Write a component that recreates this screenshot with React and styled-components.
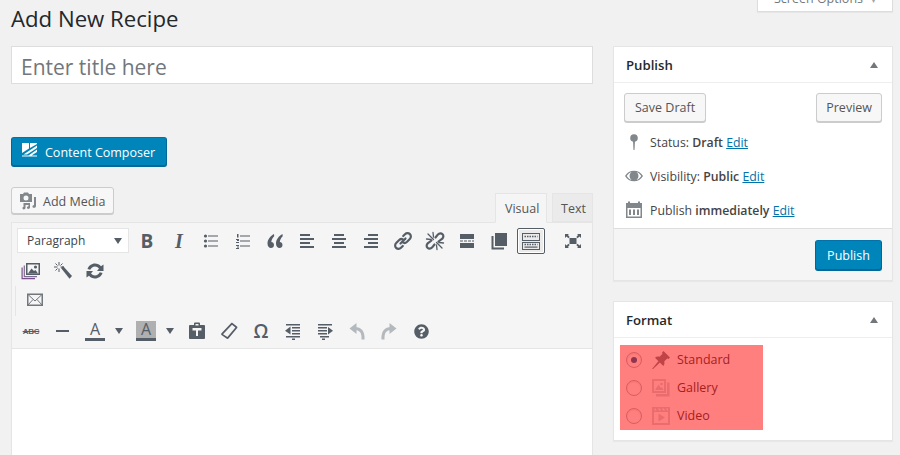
import styled, { createGlobalStyle } from "styled-components";
import { FaQuestionCircle } from "react-icons/fa";

const GlobalStyle = createGlobalStyle`
  html, body { margin: 0; padding: 0; height: 455px; overflow: hidden; background: #f1f1f1; }
  body { font-family: "Open Sans", "Liberation Sans", sans-serif; font-size: 13px; color: #444; }
  * { box-sizing: border-box; }
`;

const ink = "#555d66";

const Ico = ({ children, size = 20, color = ink }) => (
  <svg width={size} height={size} viewBox="0 0 20 20" fill={color} stroke="none">
    {children}
  </svg>
);

const Bars = ({ rows }) => rows.map(([x, y, w, h = 2], i) => <rect key={i} x={x} y={y} width={w} height={h} />);

const BulletIcon = () => (
  <Ico>
    <circle cx="4.5" cy="5" r="1.6" /><circle cx="4.5" cy="10" r="1.6" /><circle cx="4.5" cy="15" r="1.6" />
    <Bars rows={[[7, 4.5, 10, 1], [7, 9.5, 10, 1], [7, 14.5, 10, 1]]} />
  </Ico>
);
const NumberIcon = () => (
  <Ico>
    <Bars rows={[[4, 3, 1.5, 3.5], [3, 8, 3, 1], [4, 9, 2, 1], [3, 11, 3, 1], [3, 14, 3, 1], [4, 15.5, 2, 1], [3, 17, 3, 1], [7, 4.5, 10, 1], [7, 9.5, 10, 1], [7, 14.5, 10, 1]]} />
  </Ico>
);
const QuoteIcon = () => (
  <Ico>
    <path d="M9 3C5.500 5 2.500 8.500 2.500 12.500 2.500 15.300 4 17 6 17 7.700 17 9 15.700 9 14 9 12.300 7.800 11 6.300 11 6.500 9 7.500 7 9.200 5.300Z" />
    <path d="M17.500 3C14 5 11 8.500 11 12.500 11 15.300 12.500 17 14.500 17 16.200 17 17.500 15.700 17.500 14 17.500 12.300 16.300 11 14.800 11 15 9 16 7 17.700 5.300Z" />
  </Ico>
);
const AlignLeftIcon = () => <Ico><Bars rows={[[3, 3, 10], [3, 7, 14], [3, 11, 10], [3, 15, 14]]} /></Ico>;
const AlignCenterIcon = () => <Ico><Bars rows={[[5, 3, 10], [3, 7, 14], [5, 11, 10], [3, 15, 14]]} /></Ico>;
const AlignRightIcon = () => <Ico><Bars rows={[[7, 3, 10], [3, 7, 14], [7, 11, 10], [3, 15, 14]]} /></Ico>;
const LinkIcon = () => (
  <Ico>
    <g fill="none" stroke={ink} strokeWidth="2.2" strokeLinecap="round">
      <path d="M7.500 12.500 12.500 7.500" />
      <path d="M10.200 5 12 3.200C13.400 1.800 15.600 1.800 16.900 3.100 18.200 4.400 18.200 6.600 16.800 8L13.800 11C12.600 12.100 11 12.200 9.800 11.400" />
      <path d="M9.800 15 8 16.800C6.600 18.200 4.400 18.200 3.100 16.900 1.800 15.600 1.800 13.400 3.200 12L6.200 9C7.400 7.900 9 7.800 10.200 8.600" />
    </g>
  </Ico>
);
const UnlinkIcon = () => (
  <Ico>
    <g fill="none" stroke={ink} strokeWidth="2.200" strokeLinecap="round">
      <path d="M10.500 6.500 13 3.400C14.300 2 16.300 2 17.500 3.200 18.700 4.400 18.600 6.300 17.300 7.600L13.500 10.500" />
      <path d="M9.500 13.500 7 16.600C5.700 18 3.700 18 2.500 16.800 1.300 15.600 1.400 13.700 2.700 12.400L6.500 9.500" />
      <path d="M3 3 8.500 8.500M11.500 11.500 17 17M8 1.500 8.500 6M1.500 8 6 8.500M12 18.500 11.500 14M18.500 12 14 11.500" strokeWidth="1.300" />
    </g>
  </Ico>
);
const MoreIcon = () => <Ico><Bars rows={[[3, 3, 14, 5], [3, 12, 14, 5], [3, 9.500, 3, 1], [7, 9.500, 3, 1], [11, 9.500, 3, 1], [15, 9.500, 2, 1]]} /></Ico>;
const CopyIcon = () => (
  <Ico>
    <path d="M6 2H18V15H6Z" />
    <path d="M2.500 5H4.500V16.500H15V18.500H2.500Z" />
  </Ico>
);
const SinkIcon = () => (
  <Ico>
    <Bars rows={[[1, 2, 18, 1], [1, 9, 18, 1], [1, 2, 1, 8], [18, 2, 1, 8], [1, 11, 18, 1], [1, 18, 18, 1], [1, 11, 1, 8], [18, 11, 1, 8]]} />
    <g stroke={ink} strokeWidth="1.500" strokeDasharray="1.500 1">
      <path d="M3.500 5.500H16.500" />
      <path d="M3.500 13.500H16.500" />
    </g>
    <rect x="3.500" y="15.500" width="13" height="1.200" />
  </Ico>
);
const FullIcon = () => (
  <Ico>
    <path d="M6.500 7H13.500V13H6.500Z" />
    <path d="M2 3H6L4.900 4.100 6.700 5.900 5.400 7.200 3.500 5.400 2 7Z" />
    <path d="M18 3V7L16.500 5.400 14.600 7.200 13.300 5.900 15.100 4.100 14 3Z" />
    <path d="M2 17V13L3.500 14.600 5.400 12.800 6.700 14.100 4.900 15.900 6 17Z" />
    <path d="M18 17H14L15.100 15.900 13.300 14.100 14.600 12.800 16.500 14.600 18 13Z" />
  </Ico>
);
const GalleryIcon = () => (
  <Ico>
    <path d="M.500 6.500H1.700V17H14V18.200H.500Z" fill="#7b4f8c" />
    <path d="M2.700 4.500H3.900V15H16V16.200H2.700Z" fill="#7b6d8c" />
    <path fillRule="evenodd" d="M5 2H19V14H5ZM6.500 3.500V12.500H17.500V3.500Z" />
    <circle cx="14.500" cy="6" r="1.600" />
    <path d="M7 12.500 10.500 7.500 13 10 14.500 9 17 12.500Z" />
  </Ico>
);
const WandIcon = () => (
  <Ico>
    <path d="M8 7 10 5 19 15 16.500 17.800Z" />
    <path d="M6 1V4.500M6 7.500V11M1 6H4.500M7.500 6H11M2.500 2.500 4.500 4.500M9.500 2.500 7.500 4.500M2.500 9.500 4.500 7.500" stroke={ink} strokeWidth="1" fill="none" />
  </Ico>
);
const RefreshIcon = () => (
  <Ico>
    <path d="M10 2.500C12.400 2.500 14.500 3.500 16 5.300L18.500 3.500V10H12L14 7.500C12.900 6.300 11.500 5.500 10 5.500 7.900 5.500 6.100 6.800 5.300 8.700L2.500 8C3.600 4.800 6.500 2.500 10 2.500Z" />
    <path d="M10 17.500C7.600 17.500 5.500 16.500 4 14.700L1.500 16.500V10H8L6 12.500C7.100 13.700 8.500 14.500 10 14.500 12.100 14.500 13.900 13.200 14.700 11.300L17.500 12C16.400 15.200 13.500 17.500 10 17.500Z" />
  </Ico>
);
const MailIcon = () => (
  <Ico color="#72777c">
    <path fillRule="evenodd" d="M2 3.500H18V16H2ZM3.500 5V14.500H16.500V5Z" />
    <path d="M3 4.500 10 11 17 4.500M3 15 8 9.500M17 15 12 9.500" fill="none" stroke="#72777c" strokeWidth="1" />
  </Ico>
);
const RuleIcon = () => <Ico><rect x="3" y="9" width="13" height="2" /></Ico>;
const PasteIcon = () => (
  <Ico>
    <path fillRule="evenodd" d="M3 4H7V2.500C7 2 7.500 1.500 8 1.500H12C12.500 1.500 13 2 13 2.500V4H17C17.500 4 18 4.500 18 5V17C18 17.500 17.500 18 17 18H3C2.500 18 2 17.500 2 17V5C2 4.500 2.500 4 3 4ZM8.500 3V4.500H11.500V3ZM5.500 7V9.500H9V15H11V9.500H14.500V7Z" />
  </Ico>
);
const EraserIcon = () => (
  <Ico>
    <path fillRule="evenodd" d="M13.500 2 18 5.500C18.500 6 18.500 6.800 18 7.300L9.500 17.500C9 18 8.300 18 7.800 17.700L2.500 14C2 13.500 2 12.700 2.500 12.200L12 2.200C12.400 1.800 13 1.700 13.500 2ZM13 3.700 4 13.200 8.400 16 16.400 6.500Z" />
  </Ico>
);
const OutdentIcon = () => (
  <Ico>
    <Bars rows={[[3, 3, 14, 1.5], [9, 6, 8, 1.5], [9, 9, 8, 1.5], [9, 12, 8, 1.5], [3, 15, 14, 1.5], [9, 17.500, 3, 1.5]]} />
    <path d="M2 9.700 7.500 5.500V13.500Z" />
  </Ico>
);
const IndentIcon = () => (
  <Ico>
    <Bars rows={[[3, 3, 14, 1.5], [3, 6, 9, 1.5], [3, 9, 9, 1.5], [3, 12, 9, 1.5], [5, 15, 9, 1.5], [7, 17.500, 3, 1.5]]} />
    <path d="M18 9.700 13 6V13.500Z" />
  </Ico>
);
const UndoIcon = () => (
  <Ico color="#b4b9be">
    <path d="M9.500 2V13L2.500 7.500Z" />
    <path d="M8 7.500C13 7.500 16.500 10.500 16 18.500" fill="none" stroke="#b4b9be" strokeWidth="3" />
  </Ico>
);
const RedoIcon = () => (
  <Ico color="#b4b9be">
    <path d="M10.500 2V13L17.500 7.500Z" />
    <path d="M12 7.500C7 7.500 3.500 10.500 4 18.500" fill="none" stroke="#b4b9be" strokeWidth="3" />
  </Ico>
);

const TOP_TOOLS = [BulletIcon, NumberIcon, QuoteIcon, AlignLeftIcon, AlignCenterIcon, AlignRightIcon, LinkIcon, UnlinkIcon, MoreIcon, CopyIcon];
const LAST_TOOLS = [PasteIcon, EraserIcon];
const LATE_TOOLS = [OutdentIcon, IndentIcon, UndoIcon, RedoIcon];

export default function App() {
  return (
    <>
      <GlobalStyle />
      <Page>
        <Main>
          <Heading>Add New Recipe</Heading>
          <TitleInput placeholder="Enter title here" readOnly />
          <ComposerButton>
            <svg width="16" height="14" viewBox="0 0 16 14" fill="#fff">
              <path d="M0 0H7V5.500L0 10ZM8 0H15V1L8 5ZM15 2.500V5L5 11.500H1.500ZM15 6.500V9L9.500 12.500H6.500ZM0 12.500H15V13.500H0Z" />
            </svg>
            Content Composer
          </ComposerButton>
          <EditorHead>
            <MediaButton>
              <svg width="18" height="18" viewBox="0 0 18 18" fill="#82878c">
                <path fillRule="evenodd" d="M1 2H4L5 .5H9L10 2H13V10H1ZM7 3.500A2.500 2.500 0 1 0 7 8.500 2.500 2.500 0 0 0 7 3.500Z" />
                <path d="M15 5H17V14C17 16 14 16.500 13.500 15 13.200 14 14 13 15 13ZM4.500 11H11V15.500C11 17 8.500 17.500 8 16 7.700 15 8.500 14.200 9.500 14.200V13H6.500V16C6.500 17.500 4 18 3.500 16.500 3.200 15.500 3.800 15 4.500 15Z" />
              </svg>
              Add Media
            </MediaButton>
            <Tabs>
              <Tab $active>Visual</Tab>
              <Tab>Text</Tab>
            </Tabs>
          </EditorHead>
          <Editor>
            <Toolbar>
              <ToolRow>
                <FormatSelect>Paragraph<Caret /></FormatSelect>
                <Tool><BoldGlyph>B</BoldGlyph></Tool>
                <Tool><ItalicGlyph>I</ItalicGlyph></Tool>
                {TOP_TOOLS.map((Icon, i) => <Tool key={i}><Icon /></Tool>)}
                <Tool $pressed><SinkIcon /></Tool>
                <Tool $end><FullIcon /></Tool>
              </ToolRow>
              <ToolRow>
                <Tool><GalleryIcon /></Tool>
                <Tool><WandIcon /></Tool>
                <Tool><RefreshIcon /></Tool>
              </ToolRow>
              <ToolRow $ruled>
                <Tool><MailIcon /></Tool>
              </ToolRow>
              <ToolRow>
                <Tool><StrikeGlyph>ABC</StrikeGlyph></Tool>
                <Tool><RuleIcon /></Tool>
                <Tool><ColorGlyph>A</ColorGlyph></Tool>
                <SplitArrow><Caret /></SplitArrow>
                <Tool><ColorGlyph $filled>A</ColorGlyph></Tool>
                <SplitArrow><Caret /></SplitArrow>
                {LAST_TOOLS.map((Icon, i) => <Tool key={i}><Icon /></Tool>)}
                <Tool><OmegaGlyph>Ω</OmegaGlyph></Tool>
                {LATE_TOOLS.map((Icon, i) => <Tool key={i}><Icon /></Tool>)}
                <Tool><FaQuestionCircle size={15} color={ink} /></Tool>
              </ToolRow>
            </Toolbar>
            <EditArea />
          </Editor>
        </Main>
        <Side>
          <ScreenBar>
            <ScreenTab>Screen Options<small>▾</small></ScreenTab>
          </ScreenBar>
          <Box>
            <BoxHead>Publish<Toggle /></BoxHead>
            <PublishActions>
              <Button>Save Draft</Button>
              <PreviewButton>Preview</PreviewButton>
            </PublishActions>
            <MetaRow>
              <MetaIcon>
                <svg width="20" height="20" viewBox="0 0 20 20" fill="#82878c">
                  <circle cx="10" cy="6" r="3.800" />
                  <path d="M9 9H11L10.500 18H9.500Z" />
                </svg>
              </MetaIcon>
              <span>Status: <b>Draft</b> <Edit>Edit</Edit></span>
            </MetaRow>
            <MetaRow>
              <MetaIcon>
                <svg width="20" height="20" viewBox="0 0 20 20" fill="#82878c">
                  <path fillRule="evenodd" d="M1 10C3 6.500 6.300 4.800 10 4.800S17 6.500 19 10C17 13.500 13.700 15.200 10 15.200S3 13.500 1 10ZM2.700 10C4.300 12.400 6 13.500 7.500 14A5 5 0 0 1 7.500 6C6 6.500 4.300 7.600 2.700 10ZM17.300 10C15.700 7.600 14 6.500 12.500 6A5 5 0 0 1 12.500 14C14 13.500 15.700 12.400 17.300 10Z" />
                  <circle cx="10" cy="10" r="3.500" />
                </svg>
              </MetaIcon>
              <span>Visibility: <b>Public</b> <Edit>Edit</Edit></span>
            </MetaRow>
            <MetaRow>
              <MetaIcon>
                <svg width="20" height="20" viewBox="0 0 20 20" fill="#82878c">
                  <path fillRule="evenodd" d="M2 3H4V1.500H6V3H14V1.500H16V3H18V18H2ZM3.500 8V16.500H16.500V8Z" />
                  <path d="M5 9.500H7V15H5ZM9 9.500H11V15H9ZM13 9.500H15V15H13Z" />
                </svg>
              </MetaIcon>
              <span>Publish <b>immediately</b> <Edit>Edit</Edit></span>
            </MetaRow>
            <PublishFooter>
              <PrimaryButton>Publish</PrimaryButton>
            </PublishFooter>
          </Box>
          <Box>
            <BoxHead>Format<Toggle /></BoxHead>
            <FormatBody>
              <FormatList>
                <FormatRow>
                  <Radio $checked />
                  <svg width="20" height="20" viewBox="0 0 20 20" fill="#82878c">
                    <path d="M12.500 1 19 7.500 17.500 9 16.200 8.500 13.200 11.500C13.800 13.200 13.400 14.800 12.300 16L4 7.700C5.200 6.600 6.800 6.200 8.500 6.800L11.500 3.800 11 2.500Z" />
                    <path d="M7.500 11 9 12.500 2 19 1 19Z" />
                  </svg>
                  Standard
                </FormatRow>
                <FormatRow>
                  <Radio />
                  <svg width="20" height="20" viewBox="0 0 20 20" fill="#d5d8da">
                    <path fillRule="evenodd" d="M1 1H15V15H1ZM3 3V13H13V3Z" />
                    <path d="M16 4.500H18.500V18.500H5V16H16Z" />
                    <circle cx="10.500" cy="6" r="1.300" />
                    <path d="M4 12 7.500 6.500 10 10 11 9 12.500 12Z" />
                  </svg>
                  Gallery
                </FormatRow>
                <FormatRow>
                  <Radio />
                  <svg width="20" height="20" viewBox="0 0 20 20" fill="#d5d8da">
                    <path fillRule="evenodd" d="M1 1H19V19H1ZM3 6V17H17V6ZM3.500 2.500V4.500H5.500L4.500 2.500ZM7 2.500 8 4.500H10L9 2.500ZM11 2.500 12 4.500H14L13 2.500ZM15 2.500 16 4.500H17V2.500Z" />
                    <path d="M7.500 7.500 14 11.500 7.500 15.500Z" />
                  </svg>
                  Video
                </FormatRow>
              </FormatList>
            </FormatBody>
          </Box>
        </Side>
      </Page>
    </>
  );
}

const Page = styled.div`
  display: grid;
  grid-template-columns: 582px 280px;
  column-gap: 20px;
  padding-left: 11px;
  height: 455px;
  overflow: hidden;
`;

const Main = styled.div`
  display: flex;
  flex-direction: column;
  min-width: 0;
`;

const Heading = styled.h1`
  margin: 0;
  height: 46px;
  padding-top: 4px;
  font-size: 22.2px;
  line-height: 30px;
  font-weight: 400;
  color: #23282d;
`;

const TitleInput = styled.input`
  width: 100%;
  height: 38px;
  padding: 7px 9px 3px;
  border: 1px solid #ddd;
  background: #fff;
  outline: none;
  font-family: inherit;
  font-size: 21px;
  color: #72777c;

  &::placeholder { color: #72777c; opacity: 1; }
`;

const BaseButton = styled.button`
  display: inline-flex;
  align-items: center;
  font-family: inherit;
  font-size: 12.5px;
  border-radius: 3px;
  padding: 0 10px;
  cursor: pointer;
`;

const ComposerButton = styled(BaseButton)`
  align-self: flex-start;
  gap: 7px;
  width: 156px;
  height: 30px;
  margin-top: 53px;
  color: #fff;
  background: #0085ba;
  border: 1px solid #006799;
  border-top-color: #0073aa;
  box-shadow: inset 0 -1px 0 #006799;

  svg { margin-top: -4px; }
`;

const EditorHead = styled.div`
  display: flex;
  justify-content: space-between;
  height: 35px;
  margin-top: 20px;
`;

const Button = styled(BaseButton)`
  height: 29px;
  color: #555;
  background: #f7f7f7;
  border: 1px solid #ccc;
  box-shadow: 0 1px 0 #ccc;
`;

const PreviewButton = styled(Button)`
  padding: 0 9px;
`;

const MediaButton = styled(Button)`
  gap: 6px;
  height: 27px;
  padding: 2px 8px 0 7px;

  svg { margin-top: -2px; }
`;

const Tabs = styled.div`
  display: flex;
  align-items: flex-end;
  gap: 5px;
`;

const Tab = styled.div`
  height: ${(p) => (p.$active ? 30 : 29)}px;
  margin-bottom: ${(p) => (p.$active ? -1 : 0)}px;
  padding: 0 ${(p) => (p.$active ? 9 : 8)}px;
  width: ${(p) => (p.$active ? "52px" : "41px")};
  line-height: 30px;
  font-size: 12.5px;
  white-space: nowrap;
  color: #555;
  background: ${(p) => (p.$active ? "#f5f5f5" : "#ebebeb")};
  border: 1px solid #e5e5e5;
  border-bottom-color: ${(p) => (p.$active ? "#f5f5f5" : "#e5e5e5")};
  position: relative;
`;

const Editor = styled.div`
  flex: 1;
  border: 1px solid #e5e5e5;
  background: #fff;
`;

const Toolbar = styled.div`
  display: flex;
  flex-direction: column;
  gap: 4px;
  padding: 5px 5px 4px;
  background: #f5f5f5;
  border-bottom: 1px solid #e5e5e5;
`;

const ToolRow = styled.div`
  display: flex;
  gap: 4px;
  height: 26px;
  ${(p) =>
    p.$ruled &&
    `
    margin: -2px 0 -2px -2px;
    height: 30px;
    padding: 1px 0 3px 5px;
    border-left: 1px solid #e5e5e5;
  `}
`;

const Tool = styled.div`
  display: flex;
  align-items: center;
  justify-content: center;
  width: 28px;
  height: 26px;
  color: ${ink};
  ${(p) => p.$end && "margin-left: auto;"}
  ${(p) => p.$pressed && `border: 1px solid ${ink}; border-radius: 2px; background: #ebebeb; box-shadow: inset 0 0 0 1px #fff;`}
`;

const FormatSelect = styled.div`
  display: flex;
  align-items: center;
  justify-content: space-between;
  width: 112px;
  height: 25px;
  padding: 0 6px 0 9px;
  background: #fff;
  border: 1px solid #e5e5e5;
  font-size: 12px;
  color: #3c434a;
`;

const Caret = styled.i`
  width: 0;
  height: 0;
  border-left: 4px solid transparent;
  border-right: 4px solid transparent;
  border-top: 6px solid ${ink};
`;

const SplitArrow = styled.div`
  display: flex;
  align-items: center;
  justify-content: center;
  width: 19px;
  height: 26px;
  margin-left: -4px;
`;

const BoldGlyph = styled.span`
  font: 700 19px/24px "Open Sans", sans-serif;
`;

const ItalicGlyph = styled.span`
  font: italic 700 20px/24px "Liberation Serif", serif;
`;

const StrikeGlyph = styled.span`
  font: 700 8px "Liberation Sans", sans-serif;
  text-decoration: line-through;
  letter-spacing: -.2px;
`;

const ColorGlyph = styled.span`
  width: 20px;
  height: 20px;
  text-align: center;
  font: 400 16px/17px "Open Sans", sans-serif;
  background: ${(p) => (p.$filled ? "#b0b0b0" : "transparent")};
  border-bottom: 3px solid ${ink};
`;

const OmegaGlyph = styled.span`
  font: 600 19px/24px "Open Sans", sans-serif;
`;

const EditArea = styled.div`
  height: 120px;
  background: #fff;
`;

const Side = styled.aside`
  display: flex;
  flex-direction: column;
  min-width: 0;
`;

const ScreenBar = styled.div`
  display: flex;
  justify-content: flex-end;
  height: 46px;
`;

const ScreenTab = styled.div`
  display: flex;
  align-items: flex-end;
  justify-content: center;
  gap: 8px;
  width: 136px;
  height: 12px;
  padding-bottom: 5px;
  line-height: 14px;
  overflow: hidden;
  font-size: 12.5px;
  color: #72777c;
  background: #fff;
  border: 1px solid #ddd;
  border-top: 0;
  box-shadow: 0 1px 1px rgba(0, 0, 0, .04);

  small { font-size: 10px; color: #a0a5aa; }
`;

const Box = styled.section`
  background: #fff;
  border: 1px solid #e5e5e5;
  box-shadow: 0 1px 1px rgba(0, 0, 0, .04);
  margin-bottom: 20px;
`;

const BoxHead = styled.h2`
  display: flex;
  align-items: center;
  justify-content: space-between;
  height: 36px;
  margin: 0;
  padding: 0 14px 0 12px;
  border-bottom: 1px solid #eee;
  font-size: 13.2px;
  font-weight: 600;
  color: #23282d;
`;

const Toggle = styled.i`
  width: 0;
  height: 0;
  border-left: 4px solid transparent;
  border-right: 4px solid transparent;
  border-bottom: 6px solid #72777c;
`;

const PublishActions = styled.div`
  display: flex;
  justify-content: space-between;
  padding: 10px 10px 0;
  margin-bottom: 3px;
`;

const MetaRow = styled.div`
  display: flex;
  align-items: center;
  gap: 4px;
  height: 34px;
  padding-left: 10px;
  font-size: 12.3px;

  b { font-weight: 600; }
`;

const MetaIcon = styled.span`
  display: flex;
  justify-content: center;
  width: 20px;
  margin-right: 2px;
`;

const Edit = styled.a`
  color: #0073aa;
  text-decoration: underline;
`;

const PublishFooter = styled.div`
  display: flex;
  justify-content: flex-end;
  margin-top: 1px;
  padding: 11px 10px 9px;
  background: #f5f5f5;
  border-top: 1px solid #ddd;
`;

const PrimaryButton = styled(BaseButton)`
  justify-content: center;
  width: 67px;
  height: 31px;
  color: #fff;
  background: #0085ba;
  border: 1px solid #006799;
  border-top-color: #0073aa;
  box-shadow: inset 0 -1px 0 #006799;
`;

const FormatBody = styled.div`
  padding: 7px 129px 10px 6px;
`;

const FormatList = styled.div`
  position: relative;
  padding: 0 0 1px 6px;

  &::after {
    content: "";
    position: absolute;
    inset: 0;
    background: rgba(255, 0, 0, .5);
  }
`;

const FormatRow = styled.div`
  display: flex;
  align-items: center;
  height: 28px;
  font-size: 12.5px;
  gap: 6px;
  padding-top: 1px;
`;

const Radio = styled.span`
  display: flex;
  align-items: center;
  justify-content: center;
  width: 16px;
  height: 16px;
  margin-right: 3px;
  border: 1px solid #b4b9be;
  border-radius: 50%;
  background: #fff;
  box-shadow: inset 0 1px 2px rgba(0, 0, 0, .1);

  &::before {
    content: "";
    width: 6px;
    height: 6px;
    border-radius: 50%;
    background: ${(p) => (p.$checked ? "#1e6a9e" : "transparent")};
  }
`;
